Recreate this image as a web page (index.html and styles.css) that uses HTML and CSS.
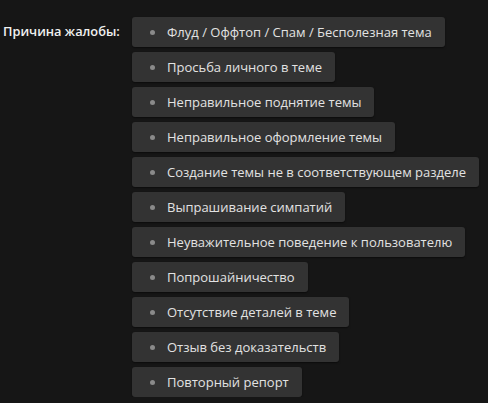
FILE: index.html
```html
<!DOCTYPE html>
<html lang="ru">
<head>
  <meta charset="UTF-8">
  <title>Причина жалобы</title>
  <link rel="stylesheet" href="styles.css">
</head>
<body>
  <div class="report-row">
    <div class="report-label">Причина жалобы:</div>
    <ul class="reason-list">
      <li class="reason">Флуд / Оффтоп / Спам / Бесполезная тема</li>
      <li class="reason">Просьба личного в теме</li>
      <li class="reason">Неправильное поднятие темы</li>
      <li class="reason">Неправильное оформление темы</li>
      <li class="reason">Создание темы не в соответствующем разделе</li>
      <li class="reason">Выпрашивание симпатий</li>
      <li class="reason">Неуважительное поведение к пользователю</li>
      <li class="reason">Попрошайничество</li>
      <li class="reason">Отсутствие деталей в теме</li>
      <li class="reason">Отзыв без доказательств</li>
      <li class="reason">Повторный репорт</li>
    </ul>
  </div>
</body>
</html>
```

FILE: styles.css
```css
body { margin: 0; background-color: #161616; color: #e2e2e2; font-family: "Open Sans", sans-serif; font-size: 13px; }
.report-row { display: flex; padding: 17px 0 0 3px; }
.report-label { width: 129px; font-size: 12.8px; font-weight: 600; line-height: 28px; color: #f0f0f0; }
.reason-list { list-style: none; margin: 0; padding: 0; display: flex; flex-direction: column; align-items: flex-start; gap: 5px; }
.reason { display: flex; align-items: center; height: 30px; padding: 0 13px 0 18px; background-color: #333333; border-radius: 3px; box-shadow: 0 1px 2px rgba(0, 0, 0, 0.5); }
.reason::before { content: ""; width: 5px; height: 5px; margin-right: 12px; border-radius: 50%; background-color: #8a8a8a; }
```
